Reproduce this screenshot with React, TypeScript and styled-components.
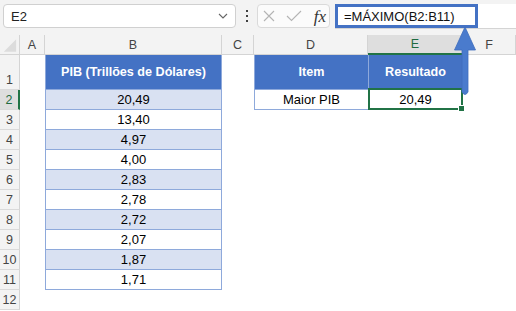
import styled, { createGlobalStyle } from "styled-components"

const GlobalStyle = createGlobalStyle`
  html, body {
    margin: 0;
    padding: 0;
    background: #ffffff;
  }
  body {
    font-family: "Liberation Sans", Arial, sans-serif;
  }
`

const gdp = ["20,49", "13,40", "4,97", "4,00", "2,83", "2,78", "2,72", "2,07", "1,87", "1,71"]
const columns = ["A", "B", "C", "D", "E", "F"]

const App = () => {
  const rows = Array.from({ length: 12 }, (_, i) => i + 1)
  return (
    <Page>
      <GlobalStyle />
      <Toolbar>
        <NameBox>
          <span>E2</span>
          <svg width="10" height="6" viewBox="0 0 10 6">
            <polyline points="1,1 5,5 9,1" fill="none" stroke="#666" strokeWidth="1.1" />
          </svg>
        </NameBox>
        <Dots>
          <i />
          <i />
          <i />
        </Dots>
        <FormulaButtons>
          <svg width="12" height="12" viewBox="0 0 12 12">
            <path d="M1 1 L11 11 M11 1 L1 11" stroke="#b4b4b4" strokeWidth="1.1" />
          </svg>
          <svg width="16" height="12" viewBox="0 0 16 12">
            <polyline points="1,6 5.5,10.5 15,1" fill="none" stroke="#b4b4b4" strokeWidth="1.1" />
          </svg>
          <Fx>fx</Fx>
        </FormulaButtons>
        <FormulaField>
          <FormulaInput>=MÁXIMO(B2:B11)</FormulaInput>
        </FormulaField>
      </Toolbar>

      <Sheet>
        <Corner>
          <svg width="20" height="20" viewBox="0 0 20 20">
            <polygon points="17,4 17,17 4,17" fill="#dcdcdc" />
          </svg>
        </Corner>
        {columns.map((c) => (
          <ColHead key={c} $active={c === "E"}>
            {c}
          </ColHead>
        ))}

        {rows.map((r) => (
          <Row key={r} r={r} />
        ))}
      </Sheet>

      <Arrow width="26" height="72" viewBox="0 0 26 72">
        <path
          d="M13 1 L23.5 24 L16 24 L16 66 Q13 71 10 66 L10 24 L2.5 24 Z"
          fill="#4a7bcd"
          stroke="#3f6dbd"
          strokeWidth="0.8"
        />
      </Arrow>
    </Page>
  )
}

const Row = ({ r }: { r: number }) => {
  const idx = r - 2
  const inTable = r >= 2 && r <= 11
  return (
    <>
      <RowHead $active={r === 2}>{r}</RowHead>
      <Cell />
      {r === 1 ? (
        <HeadCell $left $right>PIB (Trillões de Dólares)</HeadCell>
      ) : inTable ? (
        <DataCell $left $right $band={idx % 2 === 0}>
          {gdp[idx]}
        </DataCell>
      ) : (
        <Cell />
      )}
      <Cell />
      {r === 1 ? (
        <HeadCell $left>Item</HeadCell>
      ) : r === 2 ? (
        <DataCell $left>Maior PIB</DataCell>
      ) : (
        <Cell />
      )}
      {r === 1 ? (
        <HeadCell $left $right>Resultado</HeadCell>
      ) : r === 2 ? (
        <Selected $left $right>
          20,49
          <Handle />
        </Selected>
      ) : (
        <Cell />
      )}
      <Cell />
    </>
  )
}

export default App

const Page = styled.div`
  position: relative;
  width: 516px;
  height: 311px;
  overflow: hidden;
  background: #ffffff;
`

const Toolbar = styled.div`
  display: flex;
  align-items: flex-start;
  height: 35px;
  padding-top: 4px;
  box-sizing: border-box;
  background: #f3f3f3;
`

const NameBox = styled.div`
  width: 233px;
  height: 24px;
  margin-left: 3px;
  box-sizing: border-box;
  display: flex;
  align-items: center;
  justify-content: space-between;
  padding: 0 7px 0 7px;
  background: #ffffff;
  border: 1px solid #d0d0d0;
  border-radius: 4px;
  font-size: 13px;
  color: #222;
`

const Dots = styled.div`
  width: 21px;
  height: 24px;
  display: flex;
  flex-direction: column;
  align-items: center;
  justify-content: center;
  gap: 3px;

  i {
    display: block;
    width: 2px;
    height: 2px;
    background: #404040;
  }
`

const FormulaButtons = styled.div`
  width: 73px;
  height: 24px;
  box-sizing: border-box;
  display: flex;
  align-items: center;
  justify-content: space-between;
  padding: 0 3px 0 5px;
  background: #fbfbfb;
  border: 1px solid #dadada;
  border-radius: 4px;
`

const Fx = styled.span`
  font-family: "Liberation Serif", "Times New Roman", serif;
  font-style: italic;
  font-size: 17px;
  color: #333;
  line-height: 1;
`

const FormulaField = styled.div`
  flex: 1;
  height: 24px;
  margin-left: 5px;
  background: #ffffff;
  border-bottom: 1px solid #d4d4d4;
  display: flex;
`

const FormulaInput = styled.div`
  width: 143px;
  height: 24px;
  box-sizing: border-box;
  border: 3px solid #4472c4;
  padding-left: 6px;
  display: flex;
  align-items: center;
  font-size: 13px;
  color: #111;
`

const Sheet = styled.div`
  display: grid;
  grid-template-columns: 20px 25px 177px 32px 114px 95px 1fr;
  grid-template-rows: 20px 35px repeat(11, 20px);
`

const Corner = styled.div`
  background: #f3f3f3;
  border-right: 1px solid #d4d4d4;
  border-bottom: 1px solid #d4d4d4;
  box-sizing: border-box;
  display: flex;
`

const ColHead = styled.div<{ $active?: boolean }>`
  box-sizing: border-box;
  display: flex;
  align-items: center;
  justify-content: center;
  font-size: 12.5px;
  color: ${(p) => (p.$active ? "#1e6b41" : "#444")};
  background: ${(p) => (p.$active ? "#dedede" : "#f3f3f3")};
  border-right: 1px solid #d4d4d4;
  border-bottom: ${(p) => (p.$active ? "2px solid #217346" : "1px solid #d4d4d4")};
`

const RowHead = styled.div<{ $active?: boolean }>`
  box-sizing: border-box;
  display: flex;
  align-items: flex-end;
  justify-content: center;
  padding-bottom: 2px;
  font-size: 12.5px;
  color: ${(p) => (p.$active ? "#1e6b41" : "#444")};
  background: ${(p) => (p.$active ? "#dedede" : "#f3f3f3")};
  border-bottom: 1px solid #dadada;
  border-right: ${(p) => (p.$active ? "2px solid #217346" : "1px solid #d4d4d4")};
`

const Cell = styled.div`
  background: #ffffff;
`

const TableCell = styled.div<{ $left?: boolean; $right?: boolean }>`
  box-sizing: border-box;
  display: flex;
  align-items: center;
  justify-content: center;
  font-size: 13px;
  color: #000;
  border-bottom: 1px solid #8ea9db;
  border-left: ${(p) => (p.$left ? "1px solid #8ea9db" : "none")};
  border-right: ${(p) => (p.$right ? "1px solid #8ea9db" : "none")};
`

const HeadCell = styled(TableCell)`
  background: #4472c4;
  color: #ffffff;
  font-weight: 700;
  font-size: 12.6px;
`

const DataCell = styled(TableCell)<{ $band?: boolean }>`
  background: ${(p) => (p.$band ? "#d9e1f2" : "#ffffff")};
`

const Selected = styled(TableCell)`
  position: relative;
  background: #ffffff;

  &::after {
    content: "";
    position: absolute;
    left: -1px;
    top: -2px;
    right: -1px;
    bottom: -1px;
    border: 2px solid #217346;
  }
`

const Handle = styled.span`
  position: absolute;
  right: -3px;
  bottom: -3px;
  width: 5px;
  height: 5px;
  background: #217346;
  border: 1px solid #ffffff;
  z-index: 1;
`

const Arrow = styled.svg`
  position: absolute;
  left: 452px;
  top: 26px;
`
